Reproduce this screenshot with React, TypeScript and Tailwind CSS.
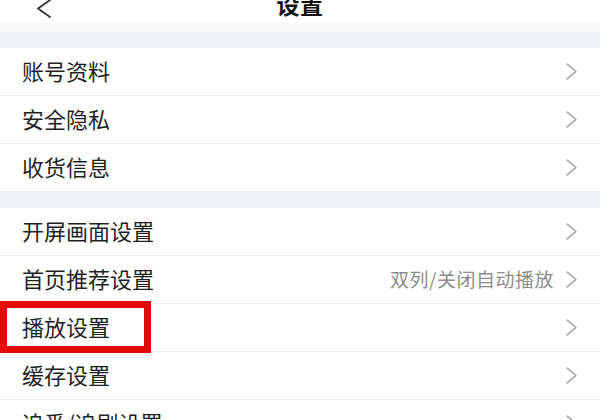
import React from 'react';

const Chevron = () => (
  <svg width="11" height="17" viewBox="0 0 11 17" fill="none" className="shrink-0">
    <path d="M1 1 L10 8.5 L1 16" stroke="#9a9a9a" strokeWidth="1.4" strokeLinecap="round" strokeLinejoin="round" />
  </svg>
);

type Item = { label: string; value?: string; marked?: boolean };

const Row = ({ item }: { item: Item }) => (
  <div className="relative flex h-[48px] items-center border-b border-[#ececec] pl-[22px] pr-[23px]">
    <span className="mb-[4px] flex-1 text-[22px] leading-none text-[#1f1f1f]">{item.label}</span>
    {item.value && (
      <span className="mb-[3px] mr-[12px] text-[19px] leading-none tracking-[0.5px] text-[#8c8c8c]">{item.value}</span>
    )}
    <Chevron />
    {item.marked && (
      <div className="absolute left-0 top-[-3px] h-[52px] w-[151px] border-[7px] border-[#e80a0a]" />
    )}
  </div>
);

const Gap = () => (
  <div className="h-[16px] bg-[#f1f2f4]" />
);

const App = () => {
  const groupA: Item[] = [
    { label: '账号资料' },
    { label: '安全隐私' },
    { label: '收货信息' },
  ];
  const groupB: Item[] = [
    { label: '开屏画面设置' },
    { label: '首页推荐设置', value: '双列/关闭自动播放' },
    { label: '播放设置', marked: true },
    { label: '缓存设置' },
    { label: '追番/追剧设置' },
  ];

  return (
    <div className="h-[420px] w-[600px] overflow-hidden bg-white font-['Noto_Sans_CJK_SC',sans-serif]">
      {/* Header, scrolled mostly out of view */}
      <div className="relative flex h-[23px] justify-center overflow-hidden bg-white">
        <svg width="15" height="19" viewBox="0 0 15 19" fill="none" className="absolute left-[36px] top-[-1px]">
          <path d="M14 1 L2 9.5 L14 18" stroke="#333" strokeWidth="1.8" strokeLinecap="round" strokeLinejoin="round" />
        </svg>
        <span className="mt-[-8px] text-[23px] font-bold leading-[24px] tracking-[0.5px] text-[#111]">设置</span>
      </div>
      <div className="h-[9px] bg-[#f9f9f9]" />
      <Gap />
      {groupA.map((item) => (
        <Row key={item.label} item={item} />
      ))}
      <Gap />
      {groupB.map((item) => (
        <Row key={item.label} item={item} />
      ))}
    </div>
  );
};

export default App;
